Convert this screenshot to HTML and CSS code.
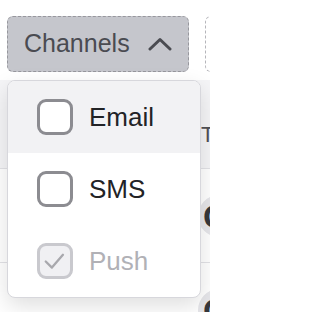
FILE: index.html
```html
<!DOCTYPE html>
<html>
<head>
<meta charset="utf-8">
<link rel="stylesheet" href="styles.css">
</head>
<body>
<div class="page">
  <div class="toolbar">
    <button class="filter-btn active">
      <span>Channels</span>
      <svg class="chev" width="24" height="14" viewBox="0 0 24 14"><polyline points="2,12 12,2.5 22,12" fill="none" stroke="#4a4b51" stroke-width="3" stroke-linecap="round" stroke-linejoin="round"/></svg>
    </button>
    <button class="filter-btn ghost"></button>
  </div>
  <div class="table">
    <div class="thead"><span class="th">Type</span></div>
    <div class="trow"><span class="avatar">G</span></div>
    <div class="trow"><span class="avatar">G</span></div>
  </div>
  <div class="menu">
    <div class="opt hover">
      <span class="box"></span>
      <span class="label">Email</span>
    </div>
    <div class="opt">
      <span class="box"></span>
      <span class="label">SMS</span>
    </div>
    <div class="opt disabled">
      <span class="box checked">
        <svg width="34" height="34" viewBox="0 0 34 34"><polyline points="6.5,17.5 13.5,24.5 26,10" fill="none" stroke="#a8a8ad" stroke-width="2.6" stroke-linecap="round" stroke-linejoin="round"/></svg>
      </span>
      <span class="label">Push</span>
    </div>
  </div>
</div>
</body>
</html>
```
FILE: styles.css
```css
html, body {
  margin: 0;
  padding: 0;
  background: #ffffff;
  font-family: "Liberation Sans", Arial, sans-serif;
  overflow: hidden;
}
.page {
  position: relative;
  width: 210px;
  height: 312px;
  overflow: hidden;
}
.toolbar {
  display: flex;
  gap: 16px;
  padding: 16px 0 0 7px;
  height: 56px;
  margin-bottom: 8px;
}
.filter-btn {
  flex: none;
  height: 56px;
  box-sizing: border-box;
  border-radius: 6px;
  border: 1px dashed #97979d;
  display: flex;
  align-items: center;
  font-family: inherit;
  padding: 0 16px 0 16px;
  margin: 0;
}
.filter-btn.active {
  width: 182px;
  background: #c5c6cc;
  color: #4a4b51;
  font-size: 25px;
  gap: 18px;
}
.filter-btn.active span { padding-bottom: 1px; }
.filter-btn.ghost {
  width: 120px;
  background: #ffffff;
  border-color: #b5b5ba;
}
.chev { flex: none; }
.table {
  display: flex;
  flex-direction: column;
}
.thead {
  height: 89px;
  background: #f5f5f7;
  border-bottom: 1px solid #e2e2e6;
  display: flex;
  align-items: center;
  padding-top: 22px;
  box-sizing: border-box;
  padding-left: 201px;
}
.th {
  font-size: 22px;
  color: #4f5055;
  white-space: nowrap;
}
.trow {
  height: 94px;
  border-bottom: 1px solid #e2e2e6;
  display: flex;
  align-items: center;
  padding-left: 198px;
  box-sizing: border-box;
}
.avatar {
  flex: none;
  width: 42px;
  height: 42px;
  border-radius: 50%;
  background: #e6e6ea;
  display: flex;
  align-items: center;
  padding-left: 5px;
  box-sizing: border-box;
  font-weight: bold;
  font-size: 34px;
  line-height: 1;
  color: #36373b;
}
.menu {
  position: absolute;
  left: 7px;
  top: 80px;
  width: 194px;
  box-sizing: border-box;
  background: #ffffff;
  border: 1px solid #d7d7dc;
  border-radius: 8px;
  box-shadow: 0 8px 22px rgba(0, 0, 0, 0.13);
  overflow: hidden;
}
.opt {
  height: 72px;
  display: flex;
  align-items: center;
  gap: 16px;
  padding-left: 29px;
}
.opt.hover { background: #f2f2f4; }
.box {
  flex: none;
  width: 36px;
  height: 36px;
  box-sizing: border-box;
  border: 3px solid #8c8c91;
  border-radius: 9px;
  background: #ffffff;
  display: flex;
  align-items: center;
  justify-content: center;
}
.box.checked {
  border-color: #c9c9ce;
  background: #f0f0f3;
}
.box svg { display: block; }
.label {
  font-size: 26px;
  color: #222326;
}
.opt.disabled .label { color: #b1b1b6; }
```
